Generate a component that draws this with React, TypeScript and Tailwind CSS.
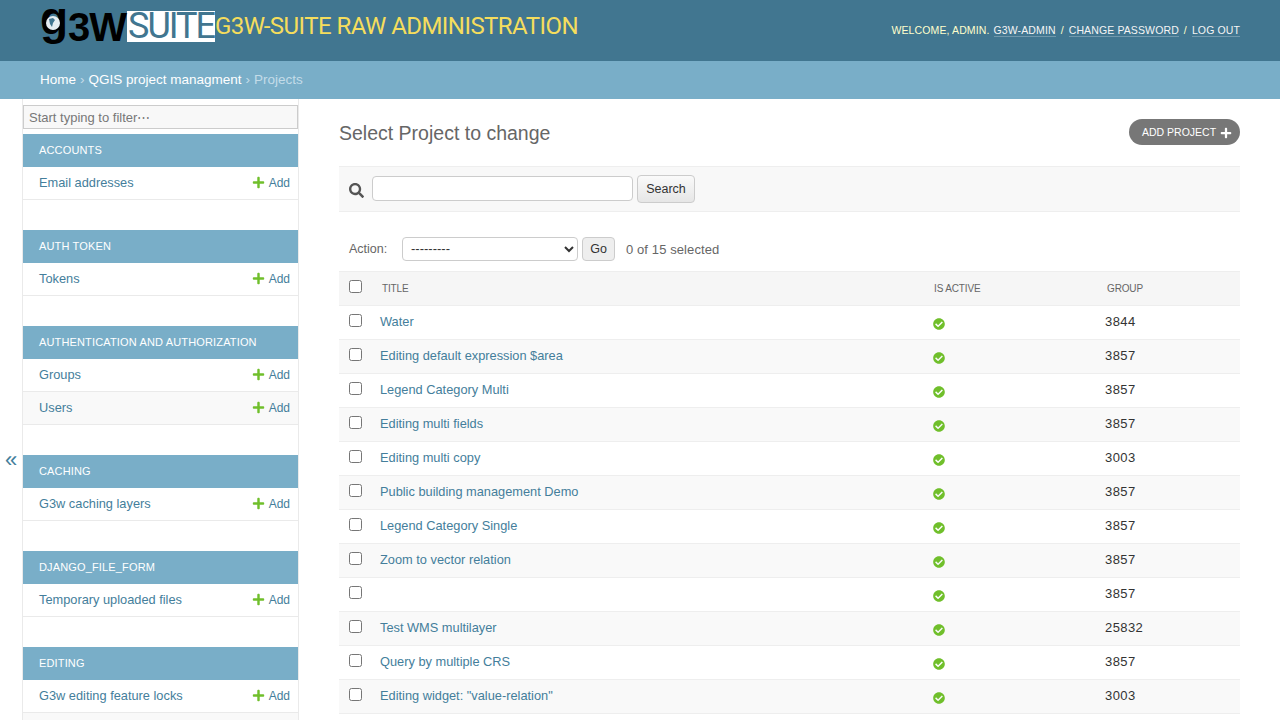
import React from "react";
import { FaCheckCircle, FaPlus, FaSearch } from "react-icons/fa";

const modules = [
  { name: "ACCOUNTS", items: ["Email addresses"] },
  { name: "AUTH TOKEN", items: ["Tokens"] },
  { name: "AUTHENTICATION AND AUTHORIZATION", items: ["Groups", "Users"] },
  { name: "CACHING", items: ["G3w caching layers"] },
  { name: "DJANGO_FILE_FORM", items: ["Temporary uploaded files"] },
  { name: "EDITING", items: ["G3w editing feature locks"] },
];

const rows = [
  ["Water", "3844"],
  ["Editing default expression $area", "3857"],
  ["Legend Category Multi", "3857"],
  ["Editing multi fields", "3857"],
  ["Editing multi copy", "3003"],
  ["Public building management Demo", "3857"],
  ["Legend Category Single", "3857"],
  ["Zoom to vector relation", "3857"],
  ["", "3857"],
  ["Test WMS multilayer", "25832"],
  ["Query by multiple CRS", "3857"],
  ['Editing widget: "value-relation"', "3003"],
];

function Logo() {
  return (
    <div className="flex h-[34px] items-start">
      <div className="relative flex h-[34px] w-[87px] items-start font-['Liberation_Sans'] font-bold text-black">
        <span className="mt-[-15px] text-[46px] leading-[46px]">g</span>
        <span className="mt-[-3px] text-[40px] leading-[40px] tracking-[-1px]">3W</span>
        <svg className="absolute top-[6px] left-[6px]" width="14" height="14" viewBox="0 0 14 14">
          <circle cx="7" cy="7" r="7" fill="#e6eef2" />
          <path d="M3 3l4-1 2 2-2 3-1 4-2-3z" fill="#417690" />
        </svg>
      </div>
      <div className="mt-[1px] flex h-[31px] w-[88px] items-center justify-center bg-white font-['Roboto'] text-[36px] leading-[31px] tracking-[-2px] text-[#417690]">
        SUITE
      </div>
    </div>
  );
}

function Sidebar() {
  return (
    <aside className="w-[277px] shrink-0 border-x border-[#eaeaea] px-0 pt-[6px]">
      <input
        className="mb-[5px] block h-[24px] w-[275px] border border-[#ccc] bg-[#f8f8f8] px-[5px] text-[13px] placeholder:text-[#777]"
        placeholder="Start typing to filter⋯"
      />
      {modules.map((m) => (
        <div key={m.name} className="mb-[30px]">
          <div className="flex h-[33px] items-center bg-[#79aec8] px-4 pb-[1px] text-[11px] tracking-[0.15px] text-white">
            {m.name}
          </div>
          {m.items.map((item, i) => (
            <div
              key={item}
              className={`flex h-[33px] items-center justify-between border-b border-[#eaeaea] pr-2 pl-4 text-[12.8px] text-[#447e9b] ${i % 2 ? "bg-[#f9f9f9]" : "bg-white"}`}
            >
              <span>{item}</span>
              <span className="flex items-center gap-[4px] text-[12px]">
                <FaPlus className="mb-[2px] text-[13px] text-[#70bf2b]" />
                Add
              </span>
            </div>
          ))}
          {m.name === "EDITING" && <div className="h-[33px] bg-[#f9f9f9]" />}
        </div>
      ))}
    </aside>
  );
}

export default function App() {
  return (
    <div className="h-[720px] overflow-hidden bg-white font-['Liberation_Sans',sans-serif] text-[#333]">
      <header className="flex h-[61px] items-start justify-between bg-[#417690] px-10 pt-[10px]">
        <div className="flex items-start">
          <Logo />
          <h1 className="font-['Roboto',sans-serif] text-[24px] leading-[32px] font-normal tracking-[-0.55px] text-[#f5dd5d]">
            G3W-SUITE RAW ADMINISTRATION
          </h1>
        </div>
        <div className="pt-[13px] text-[10.5px] tracking-[0.12px] text-[#ffc]">
          WELCOME, ADMIN.{" "}
          <a className="ml-[1px] border-b border-white/25 text-[#f5f5f5]">G3W-ADMIN</a>
          <span className="mx-[5px]">/</span>
          <a className="border-b border-white/25 text-[#f5f5f5]">CHANGE PASSWORD</a>
          <span className="mx-[5px]">/</span>
          <a className="border-b border-white/25 text-[#f5f5f5]">LOG OUT</a>
        </div>
      </header>
      <nav className="flex h-[38px] items-center bg-[#79aec8] px-10 text-[13.5px] text-white">
        <a>Home</a>
        <span className="mx-[4px] text-[#c4dce8]">›</span>
        <a>QGIS project managment</a>
        <span className="mx-[4px] text-[#c4dce8]">›</span>
        <span className="text-[#c4dce8]">Projects</span>
      </nav>
      <div className="flex">
        <div className="flex w-[22px] shrink-0 justify-center pt-[349px] text-[22px] leading-[24px] text-[#447e9b]">
          «
        </div>
        <Sidebar />
        <main className="min-w-0 flex-1 pt-[20px] pr-10 pl-10">
          <div className="flex items-start justify-between">
            <h2 className="pt-[2px] text-[19.5px] leading-[24px] font-light text-[#666]">
              Select Project to change
            </h2>
            <a className="flex h-[26px] w-[111px] items-center justify-between rounded-[13px] bg-[#777] pt-[1px] pr-[8px] pl-[13px] text-[10.5px] text-white">
              ADD PROJECT
              <FaPlus className="text-[12px]" />
            </a>
          </div>
          <div className="mt-[21px] flex h-[46px] items-center gap-[4px] border-y border-[#eee] bg-[#f8f8f8] pl-[10px]">
            <FaSearch className="mt-[3px] mr-[4px] text-[15px] text-[#555]" />
            <input className="mb-[1px] h-[25px] w-[261px] rounded-[4px] border border-[#ccc] bg-white" />
            <button className="mb-[1px] h-[28px] w-[58px] rounded-[4px] border border-[#ccc] bg-linear-to-b from-[#fafafa] to-[#e6e6e6] pt-[1px] text-[12.5px] text-[#333]">
              Search
            </button>
          </div>
          <div className="flex h-[59px] items-center pt-[14px] pl-[10px] text-[12.5px] text-[#666]">
            <span className="w-[53px] pt-[2px]">Action:</span>
            <select className="h-[24px] w-[176px] rounded-[4px] border border-[#ccc] bg-white pl-[4px] text-[13px] text-[#333]">
              <option>---------</option>
            </select>
            <button className="mx-[4px] mt-[1px] h-[24px] w-[33px] rounded-[4px] border border-[#ccc] bg-[#eee] text-[12.5px] text-[#333]">
              Go
            </button>
            <span className="ml-[7px] pt-[2px] text-[13px] tracking-[0.1px]">0 of 15 selected</span>
          </div>
          <div className="flex h-[35px] items-center border-y border-[#eee] bg-[#f6f6f6] text-[10px] tracking-[-0.15px] text-[#666]">
            <input type="checkbox" className="mb-[5px] ml-[10px]" />
            <span className="ml-[20px] w-[552px]">TITLE</span>
            <span className="w-[173px]">IS ACTIVE</span>
            <span>GROUP</span>
          </div>
          {rows.map(([title, group], i) => (
            <div
              key={i}
              className={`flex h-[34px] items-center border-b border-[#eee] text-[12.8px] ${i % 2 ? "bg-[#f9f9f9]" : "bg-white"}`}
            >
              <input type="checkbox" className="mb-[5px] ml-[10px]" />
              <a className="ml-[18px] w-[553px] pb-[1px] text-[#447e9b]">{title}</a>
              <span className="w-[172px]">
                <FaCheckCircle className="mt-[2px] text-[12px] text-[#70bf2b]" />
              </span>
              <span className="pb-[1px] text-[13px] tracking-[0.4px]">{group}</span>
            </div>
          ))}
        </main>
      </div>
    </div>
  );
}
